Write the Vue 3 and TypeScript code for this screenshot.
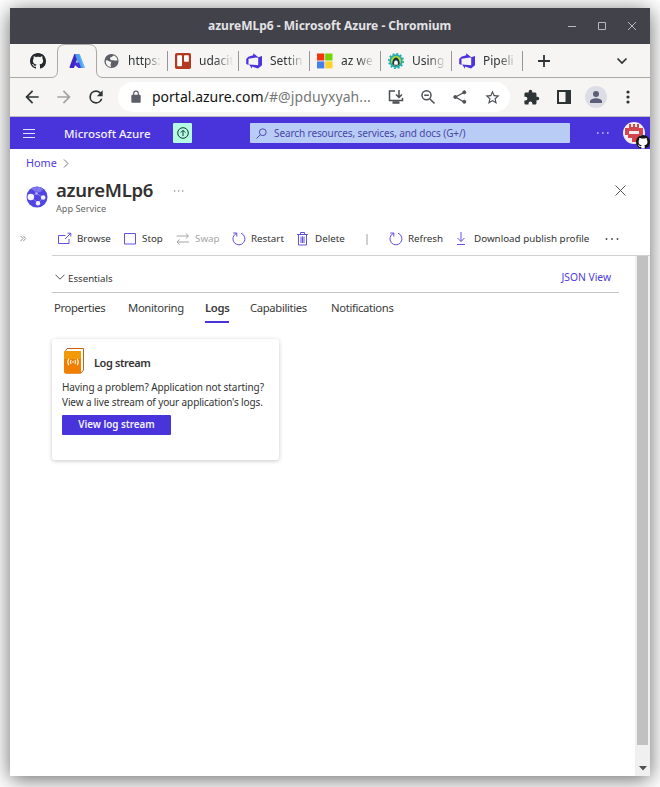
<script setup lang="ts">
interface BrowserTab {
  id: string
  title: string
}
interface Command {
  id: string
  label: string
  disabled?: boolean
}

const browserTabs: BrowserTab[] = [
  { id: 'globe', title: 'https:' },
  { id: 'trello', title: 'udacit' },
  { id: 'devops', title: 'Settin' },
  { id: 'microsoft', title: 'az we' },
  { id: 'penguin', title: 'Using' },
  { id: 'devops', title: 'Pipeli' },
]

const commands: Command[] = [
  { id: 'browse', label: 'Browse' },
  { id: 'stop', label: 'Stop' },
  { id: 'swap', label: 'Swap', disabled: true },
  { id: 'restart', label: 'Restart' },
  { id: 'delete', label: 'Delete' },
  { id: 'divider', label: '' },
  { id: 'refresh', label: 'Refresh' },
  { id: 'download', label: 'Download publish profile' },
]

const sections: string[] = ['Properties', 'Monitoring', 'Logs', 'Capabilities', 'Notifications']
const activeSection = 'Logs'

const octocat =
  'M8 0C3.58 0 0 3.58 0 8c0 3.54 2.29 6.53 5.47 7.59.4.07.55-.17.55-.38 0-.19-.01-.82-.01-1.49-2.01.37-2.53-.49-2.69-.94-.09-.23-.48-.94-.82-1.13-.28-.15-.68-.52-.01-.53.63-.01 1.08.58 1.23.82.72 1.21 1.87.87 2.33.66.07-.52.28-.87.51-1.07-1.78-.2-3.64-.89-3.64-3.95 0-.87.31-1.59.82-2.15-.08-.2-.36-1.02.08-2.12 0 0 .67-.21 2.2.82.64-.18 1.32-.27 2-.27s1.36.09 2 .27c1.53-1.04 2.2-.82 2.2-.82.44 1.1.16 1.92.08 2.12.51.56.82 1.27.82 2.15 0 3.07-1.87 3.75-3.65 3.95.29.25.54.73.54 1.48 0 1.07-.01 1.93-.01 2.2 0 .21.15.46.55.38A8.01 8.01 0 0 0 16 8c0-4.42-3.58-8-8-8z'
</script>

<template>
  <div class="desktop">
    <div class="window">
      <header class="titlebar">
        <span class="window-title">azureMLp6 - Microsoft Azure - Chromium</span>
        <svg class="window-controls" width="70" height="12" viewBox="0 0 70 12" fill="none" stroke="#b9b9bc">
          <path d="M1 6.5h8M31.500 2.500h7v7h-7zM61 2l8 8M69 2l-8 8" />
        </svg>
      </header>

      <nav class="tabstrip">
        <div class="pinned">
          <svg width="16" height="16" viewBox="0 0 16 16"><path :d="octocat" fill="#24292e" /></svg>
        </div>
        <div class="active-tab">
          <svg class="tab-outline" width="52" height="34" viewBox="0 0 52 34">
            <path d="M0 34.500V33.500Q6.500 33.500 6.500 27V8Q6.500 .5 14 .5H38Q45.500 .5 45.500 8V27Q45.500 33.500 52 33.500V34.500z" fill="#f6f5f3" />
            <path d="M0 33.500Q6.500 33.500 6.500 27V8Q6.500 .5 14 .5H38Q45.500 .5 45.500 8V27Q45.500 33.500 52 33.500" fill="none" stroke="#a9a9a6" />
          </svg>
          <svg class="azure-mark" width="16" height="16" viewBox="0 0 16 16">
            <path d="M5.300 1H10L5 15H1.400Q0 15 .7 13.500z" fill="#4126c4" />
            <path d="M6 1h4.500l5 12.800q.4 1.200-.8 1.200H10.500z" fill="#4aa0ee" />
            <path d="M10 1l4 14h1q1 0 .5-1.200L10.700 1z" fill="#65bdf8" />
            <path d="M5.500 9.500H10l2 5.500H9.500L5 11.500z" fill="#4a30d8" />
          </svg>
        </div>
        <div v-for="(tab, i) in browserTabs" :key="i" class="tab">
          <svg class="favicon" width="16" height="16" viewBox="0 0 16 16">
            <template v-if="tab.id === 'globe'">
              <circle cx="7.500" cy="8" r="7.100" fill="#5b5e66" />
              <path d="M1.800 7.500c2.500-.7 3 1.500 5.200 1.200.8 1.400-.7 1.600-.4 3.200l.6 2C4 14 1.500 11.500 1.800 7.500zM6.500 4.200c1.500.2 2-1.700 3.600-1.800 2.200.9 3.500 3 3.300 5.400-1.300-.6-2 .3-2.800-.2-1.600-1-3.700.2-4.100-1.200-.3-1-.7-1.500 0-2.200z" fill="#f6f5f3" />
            </template>
            <template v-else-if="tab.id === 'trello'">
              <rect width="16" height="16" rx="1.800" fill="#b33a1e" />
              <rect x="2.200" y="2.200" width="4.800" height="11" rx=".8" fill="#fff" />
              <rect x="9" y="2.200" width="4.800" height="6.600" rx=".8" fill="#fff" />
            </template>
            <template v-else-if="tab.id === 'devops'">
              <path d="M16 3v9.300L12 15.600l-6-2.100v2.300L3.100 11.400l9.100.8V4.200zM12.300 4.200 7.200.2v2.100L2.300 3.800.2 6v5l2.300 1V5.700z" fill="#4b33df" />
            </template>
            <template v-else-if="tab.id === 'microsoft'">
              <path d="M0 .5h7.300v7H0z" fill="#f4340c" /><path d="M8.200.5h7.300v7H8.200z" fill="#72d400" />
              <path d="M0 8.400h7.300v7H0z" fill="#4380ee" /><path d="M8.200 8.400h7.300v7H8.200z" fill="#ffd02d" />
            </template>
            <template v-else>
              <circle cx="8" cy="8" r="6.700" fill="#21aab0" />
              <circle cx="8" cy="8" r="7.200" fill="none" stroke="#21aab0" stroke-width="1.600" stroke-dasharray="2 1.770" />
              <circle cx="8" cy="8" r="5" fill="#b7d72e" />
              <path d="M4.300 11.300C4.300 9 5 5 8 4.500c3 .5 3.700 4.500 3.700 6.800Q8 14 4.300 11.300z" fill="#17304b" />
              <path d="M6.300 11.800c-.6-1.600 0-2.600.2-3.600.4-.9 1-.8 1.500-.2.500-.6 1.100-.7 1.500.2.200 1 .8 2 .2 3.600z" fill="#fff" />
            </template>
          </svg>
          <span class="tab-title">{{ tab.title }}</span>
        </div>
        <svg class="new-tab" width="14" height="14" viewBox="0 0 14 14"><path d="M7 1v12M1 7h12" stroke="#2e3436" stroke-width="1.800" /></svg>
        <svg class="tab-search" width="12" height="8" viewBox="0 0 12 8"><path d="M1.500 1.500 6 6l4.500-4.500" fill="none" stroke="#2e3436" stroke-width="1.700" /></svg>
      </nav>

      <div class="navbar">
        <svg class="nav-icon" width="20" height="20" viewBox="0 0 24 24"><path d="M20 11H7.830l5.590-5.590L12 4l-8 8 8 8 1.410-1.410L7.830 13H20v-2z" fill="#2e3436" /></svg>
        <svg class="nav-icon" width="20" height="20" viewBox="0 0 24 24"><path d="M12 4l-1.410 1.410L16.170 11H4v2h12.170l-5.580 5.590L12 20l8-8z" fill="#a2a4a4" /></svg>
        <svg class="nav-icon" width="20" height="20" viewBox="0 0 24 24"><path d="M17.650 6.350A7.958 7.958 0 0 0 12 4a8 8 0 1 0 7.730 10h-2.080A6 6 0 1 1 12 6c1.660 0 3.140.69 4.220 1.780L13 11h7V4l-2.350 2.350z" fill="#2e3436" /></svg>
        <div class="address">
          <svg class="lock" width="14" height="14" viewBox="0 0 24 24"><path d="M18 8h-1V6A5 5 0 0 0 7 6v2H6a2 2 0 0 0-2 2v10c0 1.100.9 2 2 2h12a2 2 0 0 0 2-2V10a2 2 0 0 0-2-2zM9 6a3 3 0 0 1 6 0v2H9z" fill="#5b5e66" /></svg>
          <span class="url"><b>portal.azure.com</b>/#@jpduyxyah...</span>
          <svg class="addr-icon install" width="16" height="16" viewBox="0 0 16 16" fill="none" stroke="#4c4f53" stroke-width="1.500"><path d="M7 2H1.500V11.500H14.500V9M11 1V8M8 5.500l3 3 3-3" /><path d="M4.500 13.500h7" stroke-width="2.500" /></svg>
          <svg class="addr-icon" width="16" height="16" viewBox="0 0 16 16" fill="none" stroke="#4c4f53" stroke-width="1.500"><circle cx="6.500" cy="6.300" r="4.500" /><path d="M10 10l4.500 4.500M4.200 6.300h4.600" /></svg>
          <svg class="addr-icon" width="16" height="16" viewBox="0 0 16 16" stroke="#4c4f53" fill="#4c4f53"><path d="M12 3.500 3.500 8l8.500 5" fill="none" stroke-width="1.300" /><circle cx="12.300" cy="3.300" r="1.500" /><circle cx="3.300" cy="8" r="1.500" /><circle cx="12.300" cy="12.800" r="1.500" /></svg>
          <svg class="addr-icon" width="17" height="17" viewBox="0 0 24 24"><path d="M22 9.240l-7.190-.62L12 2 9.190 8.630 2 9.240l5.460 4.730L5.820 21 12 17.270 18.180 21l-1.630-7.030L22 9.240zM12 15.400l-3.760 2.270 1-4.280-3.320-2.880 4.380-.38L12 6.100l1.710 4.040 4.380.38-3.320 2.880 1 4.280L12 15.400z" fill="#4c4f53" /></svg>
        </div>
        <svg class="extension" width="17" height="17" viewBox="0 0 24 24"><path d="M20.500 11H19V7c0-1.100-.9-2-2-2h-4V3.500a2.500 2.500 0 0 0-5 0V5H4c-1.100 0-1.990.9-1.990 2v3.800H3.500a2.700 2.700 0 0 1 0 5.400H2V20c0 1.100.9 2 2 2h3.800v-1.500a2.700 2.700 0 0 1 5.400 0V22H17c1.100 0 2-.9 2-2v-4h1.500a2.500 2.500 0 0 0 0-5z" fill="#2e3436" /></svg>
        <svg class="sidepanel" width="14" height="14" viewBox="0 0 14 14"><path d="M0 0h14v14H0zM2 2v10h6.500V2z" fill="#2e3436" fill-rule="evenodd" /></svg>
        <svg class="profile" width="22" height="22" viewBox="0 0 22 22"><circle cx="11" cy="11" r="11" fill="#dddde6" /><circle cx="11" cy="8" r="3" fill="#5c5d79" /><path d="M5 17v-1.700c0-2 4-3 6-3s6 1 6 3V17z" fill="#5c5d79" /></svg>
        <svg class="kebab" width="4" height="14" viewBox="0 0 4 14" fill="#2e3436"><circle cx="2" cy="2" r="1.600" /><circle cx="2" cy="7" r="1.600" /><circle cx="2" cy="12" r="1.600" /></svg>
      </div>

      <div class="portal-bar">
        <svg class="hamburger" width="12" height="9" viewBox="0 0 12 9"><path d="M0 .5h12M0 4.500h12M0 8.500h12" stroke="#e5e2fb" /></svg>
        <span class="brand">Microsoft Azure</span>
        <span class="upgrade"><svg width="12" height="12" viewBox="0 0 12 12" fill="none" stroke="#133a35"><circle cx="6" cy="6" r="5.300" /><path d="M6 9V3.500M3.800 5.500 6 3.300l2.200 2.200" /></svg></span>
        <div class="search">
          <svg width="11" height="11" viewBox="0 0 11 11" fill="none" stroke="#4d4ab5"><circle cx="6.800" cy="4.200" r="3.400" /><path d="M4.300 6.700.5 10.500" /></svg>
          <span>Search resources, services, and docs (G+/)</span>
        </div>
        <svg class="bar-more" width="12" height="2" viewBox="0 0 12 2" fill="#c8c2f5"><path d="M0 .2h1.600v1.600H0zM5 .2h1.600v1.600H5zM10 .2h1.600v1.600H10z" /></svg>
        <div class="avatar">
          <svg width="22" height="22" viewBox="0 0 22 22">
            <circle cx="11" cy="11" r="11" fill="#f2eef0" />
            <path d="M6 2h2v3h2V2h2v3h2V2h2v4h4v7h-3v3h-3v4H9v-4H5v-3H2V6h4zM6 9v3h10V9z" fill="#d2474e" fill-rule="evenodd" />
          </svg>
          <svg class="badge" width="14" height="14" viewBox="0 0 16 16"><circle cx="8" cy="8" r="7.500" fill="#fff" /><path :d="octocat" fill="#171515" /></svg>
        </div>
      </div>

      <main class="portal">
        <div class="breadcrumb">
          <a>Home</a>
          <svg width="6" height="9" viewBox="0 0 6 9"><path d="M1 .5l4 4-4 4" fill="none" stroke="#777" /></svg>
        </div>

        <div class="resource">
          <svg class="resource-icon" width="22" height="22" viewBox="0 0 22 22">
            <circle cx="11" cy="11" r="10.500" fill="#5145e2" />
            <path d="M4.500 2.900Q11-1.500 17.500 2.900L14 6.500 9.500 5z" fill="#7d73ee" />
            <path d="M10.500 7.500 14 1.400M10.500 7.500 5 11M10.500 7.500 17 11.500M5 11l7 6 5-5.500M7 2l3.500 5.500" fill="none" stroke="#8f87f0" stroke-width=".9" />
            <circle cx="4.800" cy="11" r="3.300" fill="#f3f2fe" /><circle cx="17.200" cy="11.500" r="2.300" fill="#f3f2fe" /><circle cx="12" cy="17.200" r="2.200" fill="#f3f2fe" /><circle cx="10.500" cy="7.500" r="1.200" fill="#b7b1f7" />
          </svg>
          <div class="resource-text">
            <h1>azureMLp6</h1>
            <p>App Service</p>
          </div>
          <svg class="resource-more" width="10" height="2" viewBox="0 0 10 2" fill="#666"><path d="M0 .4h1.300v1.200H0zM4 .4h1.300v1.200H4zM8 .4h1.300v1.200H8z" /></svg>
          <svg class="close" width="11" height="11" viewBox="0 0 11 11"><path d="M.5.5l10 10M10.500.5l-10 10" stroke="#555" /></svg>
        </div>

        <div class="commandbar">
          <svg class="expand" width="6" height="7" viewBox="0 0 6 7"><path d="M.5.8l2.500 2.700L.5 6.200M3.200.8l2.500 2.700-2.500 2.700" fill="none" stroke="#888" stroke-width=".9" /></svg>
          <div class="commands">
            <div v-for="cmd in commands" :key="cmd.id" class="command" :class="[cmd.id, { disabled: cmd.disabled }]">
              <svg v-if="cmd.id !== 'divider'" width="14" height="14" viewBox="0 0 14 14" fill="none" stroke="#6352df">
                <path v-if="cmd.id === 'browse'" d="M7.500 3.500H.5v8h10.500V7M7 7l5.500-5.500M9.500 1.200h3.300v3.300" />
                <path v-else-if="cmd.id === 'stop'" d="M.5 1.500h11v10.500H.5z" />
                <path v-else-if="cmd.id === 'swap'" d="M.5 4h12M9.800 1.500 12.500 4 9.800 6.500M13 10H1M3.700 7.500 1 10l2.700 2.500" stroke="#a5a5a5" />
                <path v-else-if="cmd.id === 'delete'" d="M0 2.500h11M3.500 2.500V.5h4v2M1.500 2.500V13h8V2.500M4 4.500v6.500M5.500 4.500v6.500M7 4.500v6.500" />
                <path v-else-if="cmd.id === 'download'" d="M5 0v9.500M1.500 6 5 9.500 8.500 6M1 12.500h8" />
                <path v-else d="M1.200 1h3.600v3.600M4.600 1.300A6 6 0 1 0 9 1.200" />
              </svg>
              <span v-if="cmd.label">{{ cmd.label }}</span>
            </div>
            <svg class="cmd-more" width="14" height="2" viewBox="0 0 14 2" fill="#444"><circle cx="1.500" cy="1" r=".9" /><circle cx="7" cy="1" r=".9" /><circle cx="12.500" cy="1" r=".9" /></svg>
          </div>
        </div>

        <div class="body-row">
          <div class="content">
            <div class="essentials">
              <svg width="10" height="6" viewBox="0 0 10 6"><path d="M.5.7 5 5.200 9.500.7" fill="none" stroke="#555" /></svg>
              <span class="essentials-label">Essentials</span>
              <a class="json">JSON View</a>
            </div>
            <div class="sections">
              <span v-for="name in sections" :key="name" class="section" :class="[name.toLowerCase(), { active: name === activeSection }]">{{ name }}</span>
            </div>
            <section class="card">
              <div class="card-head">
                <svg width="20" height="26" viewBox="0 0 20 26">
                  <path d="M3 .5h16.500V22l-2.500 3H1.500V3z" fill="#fff" stroke="#c8600f" />
                  <path d="M1 3h16v22.500H2Q0 25.500 0 24V3.500z" fill="#ef7f00" />
                  <path d="M1 3h16v8H0V4z" fill="#f39a08" />
                  <g fill="none" stroke="#fff3df" stroke-width="1.200"><circle cx="9" cy="14" r=".8" fill="#fff" stroke="none" /><path d="M7 12q-1.100 2 0 4M11 12q1.100 2 0 4M4.800 10.800q-2 3.200 0 6.400M13.200 10.800q2 3.200 0 6.400" /></g>
                </svg>
                <h2>Log stream</h2>
              </div>
              <p class="line-one">Having a problem? Application not starting?</p>
              <p class="line-two">View a live stream of your application's logs.</p>
              <button type="button">View log stream</button>
            </section>
          </div>
          <div class="scrollbar">
            <div class="thumb"></div>
            <svg width="8" height="5" viewBox="0 0 8 5"><path d="M0 0h8L4 4.500z" fill="#505050" /></svg>
          </div>
        </div>
      </main>
    </div>
  </div>
</template>

<style>
body { margin: 0; background: #fff; }
</style>

<style scoped>
.desktop { box-sizing: border-box; width: 660px; height: 787px; padding: 8px 10px 11px; overflow: hidden; font-family: "Noto Sans", sans-serif; }
.window { width: 640px; height: 768px; display: flex; flex-direction: column; background: #fff; box-shadow: 0 3px 20px rgba(0, 0, 0, .6); }
svg { display: block; flex: none; }
span, a, h1, h2, p, button { white-space: nowrap; }

.titlebar { height: 36px; flex: none; background: #42424b; display: flex; align-items: center; }
.window-title { flex: none; width: 243px; margin-left: 198px; color: #e3e3e5; font-size: 12px; font-weight: 700; line-height: 36px; }
.window-controls { margin-left: 116px; }

.tabstrip { height: 33px; flex: none; display: flex; align-items: center; background: #f6f5f3; border-bottom: 1px solid #a9a9a6; }
.pinned { width: 41px; padding-left: 20px; box-sizing: border-box; }
.active-tab { position: relative; width: 46px; height: 33px; display: flex; align-items: center; }
.tab-outline { position: absolute; left: 0; top: 0; }
.azure-mark { position: relative; margin-left: 18px; }
.tab { width: 71px; height: 33px; box-sizing: border-box; display: flex; align-items: center; position: relative; padding-left: 7px; }
.tab::after { content: ""; position: absolute; right: 0; top: 7px; width: 1px; height: 20px; background: #94969a; }
.tab-title { width: 36px; margin-left: 8px; font-size: 12px; line-height: 20px; color: #2e3436; -webkit-mask-image: linear-gradient(to right, #000 45%, transparent 95%); mask-image: linear-gradient(to right, #000 45%, transparent 95%); }
.new-tab { margin-left: 14px; }
.tab-search { margin-left: 65px; }

.navbar { height: 39px; flex: none; box-sizing: border-box; display: flex; align-items: center; background: #f6f5f3; border-bottom: 1px solid #bdbcba; padding-left: 12px; }
.nav-icon { margin-right: 12px; }
.address { width: 392px; height: 30px; box-sizing: border-box; display: flex; align-items: center; background: #fff; border-radius: 15px; padding-left: 11px; }
.url { width: 226px; margin-left: 9px; font-size: 14px; letter-spacing: .1px; line-height: 30px; color: #777; }
.url b { font-weight: 400; color: #111; letter-spacing: 0; }
.addr-icon { margin-left: 16px; }
.addr-icon.install { margin-left: 10px; }
.extension { margin-left: 13px; }
.sidepanel { margin-left: 17px; }
.profile { margin-left: 14px; }
.kebab { margin-left: 19px; }

.portal-bar { height: 32px; flex: none; display: flex; align-items: center; background: #4934db; }
.hamburger { margin-left: 13px; }
.brand { width: 109px; margin-left: 29px; color: #f3f1ff; font-size: 11.500px; font-weight: 500; padding-top: 1px; }
.upgrade { width: 19px; height: 20px; display: flex; align-items: center; justify-content: center; background: #b4fbe2; border-radius: 1px; }
.search { width: 320px; height: 20px; box-sizing: border-box; margin-left: 58px; padding-left: 6px; display: flex; align-items: center; background: #b9ccf5; border-radius: 1px; color: #4747a5; font-size: 10px; letter-spacing: -.1px; }
.search span { margin-left: 7px; }
.bar-more { margin-left: 27px; }
.avatar { position: relative; margin-left: 14px; }
.badge { position: absolute; left: 13px; top: 13px; }

.portal { flex: 1; min-height: 0; display: flex; flex-direction: column; color: #333; }
.breadcrumb { height: 28px; flex: none; display: flex; align-items: center; gap: 6px; padding-left: 16px; }
.breadcrumb a { font-size: 10.800px; color: #4d3bdc; line-height: 28px; }
.resource { height: 45px; flex: none; display: flex; padding-left: 16px; }
.resource-icon { margin-top: 9px; }
.resource-text { width: 118px; margin-left: 8px; }
.resource-text h1 { margin: 0; font-size: 18.500px; font-weight: 600; letter-spacing: -.27px; line-height: 26px; color: #323130; }
.resource-text p { margin: 0; font-size: 9.200px; line-height: 12px; color: #666; }
.resource-more { margin-top: 13px; }
.close { margin: 8px 0 0 431px; }

.commandbar { height: 34px; flex: none; display: flex; }
.expand { margin: 13px 0 0 10px; }
.commands { width: 598px; flex: none; margin-left: 26px; box-sizing: border-box; border-bottom: 1px solid #d0d0d0; display: flex; padding: 1px 0 0 6px; align-items: center; }
.command { display: flex; align-items: center; height: 32px; font-size: 9.800px; color: #333; }
.command span { margin-left: 5px; line-height: 32px; }
.command.disabled { color: #a5a5a5; }
.browse { width: 66px; }
.stop { width: 52px; }
.stop span { margin-left: 4px; }
.swap { width: 56px; }
.restart { width: 65px; }
.delete { width: 69px; }
.delete span { margin-left: 4px; }
.divider { width: 23px; }
.divider::before { content: ""; width: 2px; height: 11px; background: #d0d0d0; }
.refresh { width: 67px; }
.download { width: 149px; }
.download span { margin-left: 4px; }

.body-row { flex: 1; min-height: 0; display: flex; }
.content { width: 567px; margin-left: 42px; }
.essentials { height: 30px; display: flex; align-items: center; border-bottom: 1px solid #c4c4c4; padding: 6px 8px 0 3px; }
.essentials-label { margin-left: 3px; padding-top: 2px; font-size: 9.700px; }
.json { margin-left: auto; color: #4d3bdc; font-size: 10.300px; }
.sections { display: flex; height: 31px; padding-left: 2px; font-size: 11.300px; letter-spacing: -.36px; color: #3b3b3b; }
.section { box-sizing: border-box; height: 30px; line-height: 30px; }
.properties { width: 74px; }
.monitoring { width: 77px; }
.logs { width: 24px; margin-right: 21px; }
.capabilities { width: 81px; }
.section.active { font-weight: 600; border-bottom: 2px solid #4934db; }
.card { width: 227px; height: 121px; box-sizing: border-box; margin-top: 15px; padding: 9px 10px 0; background: #fff; border-radius: 3px; box-shadow: 0 1px 4px rgba(0, 0, 0, .22); }
.card-head { display: flex; align-items: center; height: 26px; padding-left: 2px; }
.card-head h2 { margin: 4px 0 0 10px; font-size: 11px; font-weight: 600; letter-spacing: -.4px; line-height: 16px; }
.card p { margin: 0; font-size: 10px; letter-spacing: -.08px; line-height: 15px; }
.card .line-two { letter-spacing: -.12px; }
.card .line-one { margin-top: 6px; }
.card button { display: block; width: 109px; height: 20px; margin-top: 5px; padding: 0; border: 0; border-radius: 1px; background: #4934db; color: #f5f3ff; font: 600 9.800px/20px "Noto Sans", sans-serif; }
.scrollbar { width: 15px; margin-left: 16px; display: flex; flex-direction: column; align-items: center; background: #f0f0f0; }
.thumb { width: 11px; height: 489px; background: #c1c1c1; }
.scrollbar svg { margin-top: 21px; }
</style>
